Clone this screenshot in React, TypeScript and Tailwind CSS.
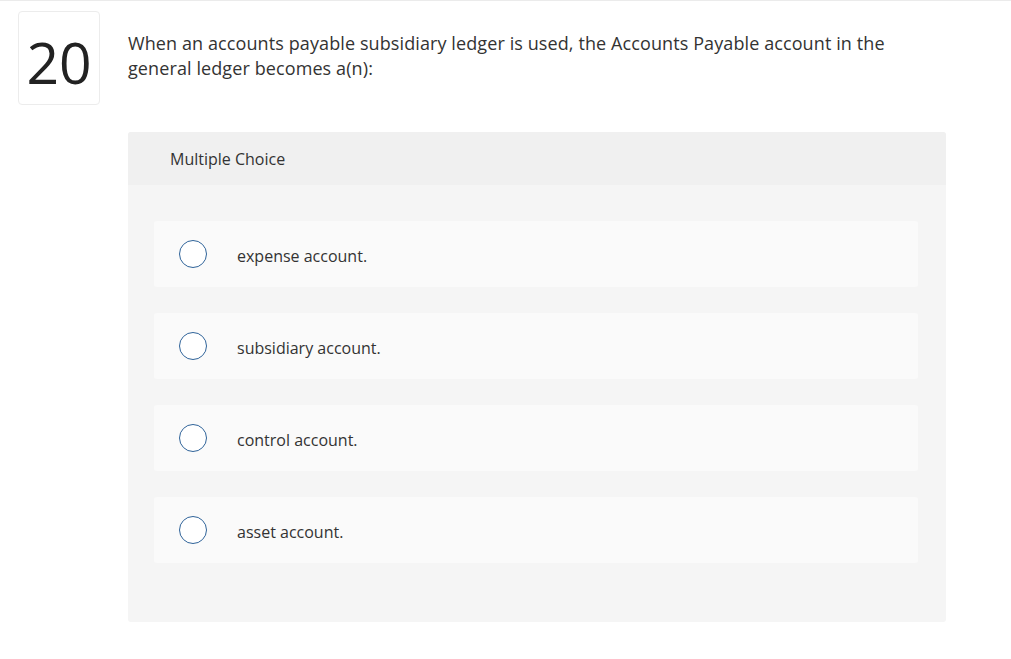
const options = ['expense account.', 'subsidiary account.', 'control account.', 'asset account.'];

export default function App() {
  return (
    <div
      className="min-h-[659px] w-full bg-white border-t border-[#ebebeb] text-[#333]"
      style={{ fontFamily: '"Open Sans", Lato, sans-serif' }}
    >
      <div className="flex pt-[10px] pl-[18px]">
        <div className="w-[82px] h-[94px] shrink-0 border border-[#ececec] rounded-[4px] flex items-center justify-center pt-[8px]">
          <span className="text-[57px] leading-none text-[#222]">20</span>
        </div>
        <div className="ml-[28px] pt-[20px] text-[18px] leading-[25px] w-[790px] tracking-[0.1px]">
          When an accounts payable subsidiary ledger is used, the Accounts Payable account in the general ledger becomes a(n):
        </div>
      </div>

      <div className="ml-[128px] mt-[27px] w-[818px] rounded-[3px] bg-[#f5f5f5] overflow-hidden">
        <div className="h-[53px] bg-[#f0f0f0] flex items-center pl-[42px] text-[16px] text-[#333]">
          Multiple Choice
        </div>
        <div className="pt-[36px] pb-[59px] pl-[26px] pr-[28px] flex flex-col gap-[26px]">
          {options.map((o) => (
            <div key={o} className="h-[66px] rounded-[3px] bg-[#fafafa] flex items-center pl-[25px]">
              <span className="w-[28px] h-[28px] rounded-full border-[1.5px] border-[#2f6399] bg-white shrink-0" />
              <span className="ml-[30px] pt-[3px] text-[16px] text-[#333]">{o}</span>
            </div>
          ))}
        </div>
      </div>
    </div>
  );
}
